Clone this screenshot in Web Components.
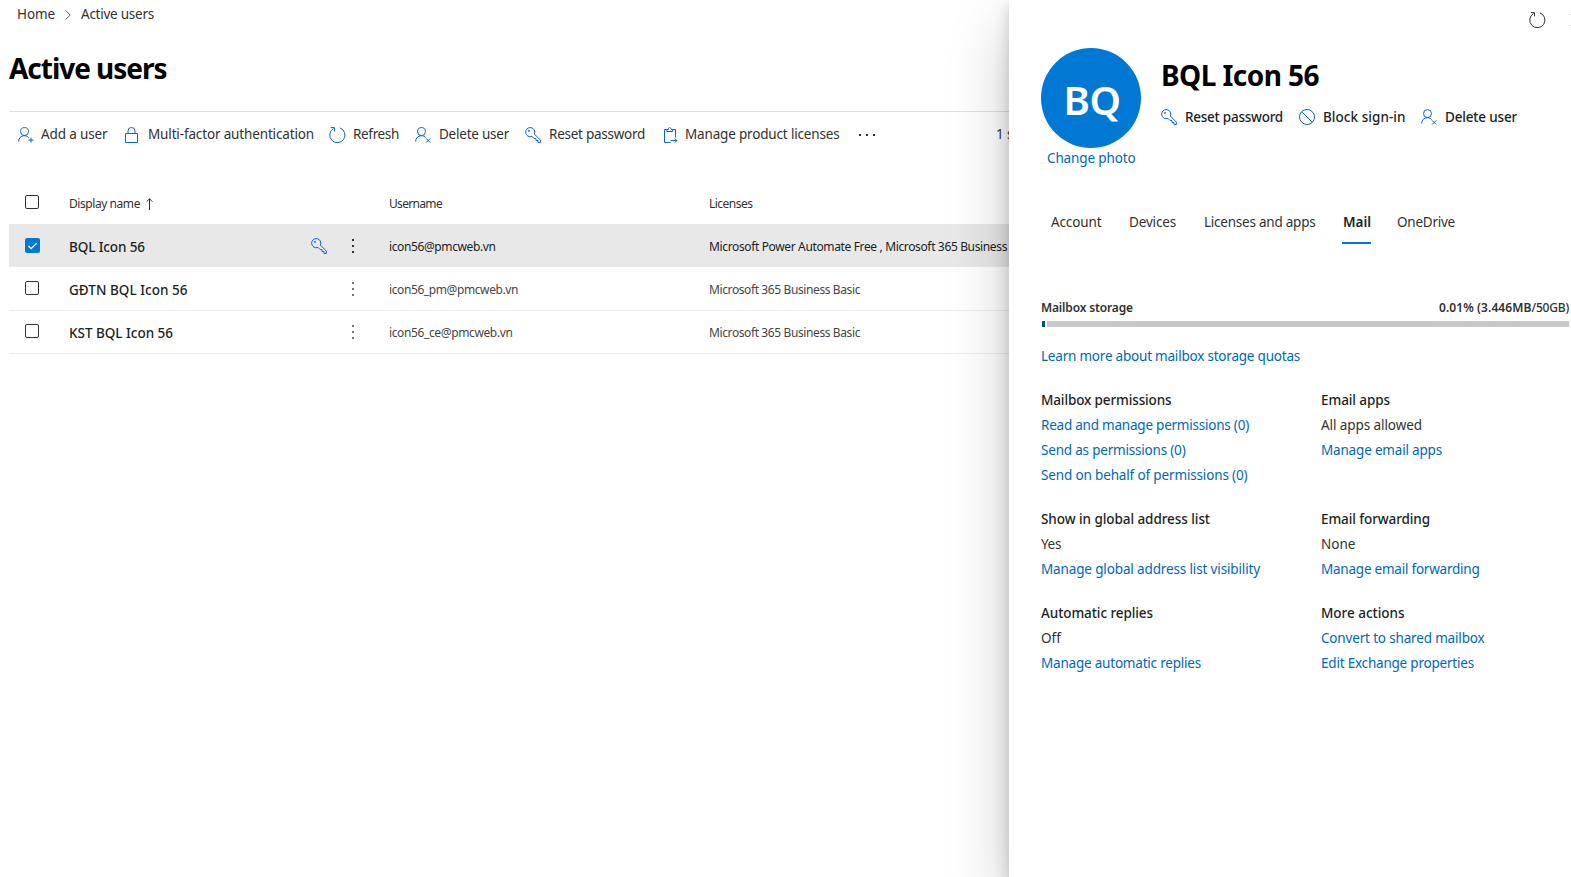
<!DOCTYPE html>
<html lang="en">
<head>
<meta charset="utf-8">
<title>Active users</title>
<style>
  html, body { margin: 0; height: 100%; overflow: hidden; background: #fff; }
  body { font-family: "Noto Sans", "Open Sans", sans-serif; font-size: 13.5px; color: #323130; }
</style>
</head>
<body>
<admin-app></admin-app>
<script>
const ICONS = {
  add: '<circle cx="6.5" cy="4.6" r="4"/><path d="M.6 14.6C.7 11 3 8.7 6.3 8.7c1.9 0 3.4.7 4.4 1.9M13 10.6v5M10.5 13.1h5"/>',
  del: '<circle cx="6.5" cy="4.6" r="4"/><path d="M.6 14.6C.7 11 3 8.7 6.3 8.7c1.9 0 3.4.7 4.4 1.9M11 11.3l4.3 4.3M15.3 11.3L11 15.6"/>',
  lock: '<path d="M1.5 6.5h12v9h-12zM4 6.500V4a3.500 3.500 0 0 1 7 0v2.500"/>',
  refresh: '<path d="M10.900.9A7.600 7.600 0 1 1 4.500 1.500"/><path d="M1.800.6h3.700v3.700"/>',
  key: '<path d="M7 9.400a4.600 4.600 0 1 1 2.400-2.300l6 6v2.300h-2.500v-1.900h-1.900v-1.900H9.200z"/><circle cx="3.900" cy="3.900" r=".6"/>',
  clip: '<path d="M8.500 15.500H2.500v-13h2.300M10.700 2.500h2.800v8M4.800 4.500V2.500h1.500C6.400 1.200 6.900.6 7.700.6s1.400.6 1.500 1.900h1.500v2zM8.500 13.500h6.500M12.700 11.300l2.200 2.200-2.200 2.200"/>',
  block: '<circle cx="8" cy="8" r="7.500"/><path d="M2.700 2.700l10.600 10.600"/>',
  close: '<path d="M.5 2.500l11 11M11.500 2.500l-11 11" stroke-width=".5"/>'
};

const define = (name, html, setup) => customElements.define(name, class extends HTMLElement {
  constructor() {
    super();
    this.attachShadow({ mode: 'open' }).innerHTML = html;
  }
  connectedCallback() { if (setup) setup(this, this.shadowRoot); }
});

/* Line icon, 16 by 16 */
define('line-icon',
  `<style>:host{display:block;width:16px;height:16px;color:#0f62cf}
  svg{display:block;overflow:visible;fill:none;stroke:currentColor;stroke-width:1}</style><svg width="16" height="16" viewBox="0 0 16 16"></svg>`,
  (el, root) => { root.querySelector('svg').innerHTML = ICONS[el.getAttribute('name')]; });

/* Single line of text, tracked so that it fills the width given in "w" */
define('fit-text',
  `<style>:host{display:block;white-space:nowrap}span{display:inline-block}</style><span><slot></slot></span>`,
  (el, root) => {
    const span = root.querySelector('span');
    const n = el.textContent.length;
    const w = parseFloat(el.getAttribute('w'));
    span.style.letterSpacing = '0px';
    const natural = span.getBoundingClientRect().width;
    span.style.letterSpacing = ((w - natural) / n).toFixed(3) + 'px';
  });

define('tool-button',
  `<style>:host{display:flex;align-items:center;line-height:20px}
  line-icon{margin-right:var(--gap,7px)}
  ::slotted(fit-text){position:relative;top:var(--rise,0)}</style><line-icon></line-icon><slot></slot>`,
  (el, root) => {
    const icon = document.createElement('line-icon');
    icon.setAttribute('name', el.getAttribute('icon'));
    root.querySelector('line-icon').replaceWith(icon);
  });

define('check-box',
  `<style>:host{display:block;box-sizing:border-box;width:14px;height:14px;border:1px solid #323130;border-radius:2px;background:#fff}
  svg{display:none}
  :host([checked]){width:15px;height:15px;border:0;background:#0078d4}
  :host([checked]) svg{display:block}</style>
  <svg width="15" height="15" viewBox="0 0 15 15" fill="none" stroke="#fff" stroke-width="1.300"><path d="M3.500 8l2.600 2.600 5.600-5.400"/></svg>`);

define('more-dots',
  `<style>:host{display:flex;flex-direction:column;gap:4px;color:#797775}
  :host([across]){flex-direction:row;gap:5px;color:#323130}
  i{width:2px;height:2px;background:currentColor}</style><i></i><i></i><i></i>`);

define('user-row',
  `<style>:host{display:grid;grid-template-columns:60px 241px 79px 320px auto;box-sizing:border-box;height:43px;padding-top:13px;border-bottom:1px solid #edebe9;
    align-items:start;font-size:12px;line-height:20px;white-space:nowrap;color:#484644}
  :host([selected]){background:#e8e8e8;border-color:#e8e8e8;color:#201f1e}
  ::slotted([slot=check]){margin:1px 0 0 16px}
  ::slotted([slot=name]){font-size:13.5px;font-weight:500;color:#201f1e}
  .acts{display:flex;padding-top:1px}
  .key{width:41px;padding-left:1px}
  more-dots{margin-top:1px}
  :host([selected]) more-dots{color:#323130}
  :host(:not([selected])) line-icon{display:none}</style>
  <slot name="check"></slot><slot name="name"></slot>
  <div class="acts"><div class="key"><line-icon name="key"></line-icon></div><more-dots></more-dots></div>
  <slot name="user"></slot><slot name="lic"></slot>`);

define('users-page',
  `<style>:host{display:block;overflow:hidden;padding-left:9px}
  nav{display:flex;align-items:center;height:20px;padding:4px 0 0 8px;color:#323130}
  nav svg{margin:1px 10px 0 10px}
  h1{margin:25px 0 0;font-size:28px;line-height:38px;font-weight:700;color:#000;height:62px}
  .bar{display:grid;grid-template-columns:106px 205px 86px 110px 137px 197px 137px auto;width:1200px;height:43px;border-top:1px solid #e1dfdd;padding:1px 0 0 9px;align-items:center;color:#323130;white-space:nowrap;line-height:20px;--rise:-1px;--gap:8px}
  .bar > :first-child{--gap:7px}
  .bar > fit-text{margin-top:-2px}
  .head{display:grid;grid-template-columns:60px 320px 320px auto;height:37px;margin-top:31px;font-size:12px;line-height:20px}
  .head check-box{margin:8px 0 0 16px}
  .head fit-text{padding-top:7px}
  .name{display:flex;gap:6px}
  .name svg{margin-top:11px}
  .table{width:1200px}
  .first{height:43px}
  .mid{height:44px;padding-top:13px}
  .last{height:43px;padding-top:12px}</style>
  <nav><fit-text w="38">Home</fit-text><svg width="6" height="10" viewBox="0 0 6 10" fill="none" stroke="#605e5c"><path d="M.7.500L5.200 5 .7 9.500"/></svg><fit-text w="73">Active users</fit-text></nav>
  <h1><fit-text w="157.500">Active users</fit-text></h1>
  <div class="bar">
    <tool-button icon="add"><fit-text w="66.500">Add a user</fit-text></tool-button>
    <tool-button icon="lock"><fit-text w="166">Multi-factor authentication</fit-text></tool-button>
    <tool-button icon="refresh"><fit-text w="46">Refresh</fit-text></tool-button>
    <tool-button icon="del"><fit-text w="70">Delete user</fit-text></tool-button>
    <tool-button icon="key"><fit-text w="96">Reset password</fit-text></tool-button>
    <tool-button icon="clip" style="--gap:7px"><fit-text w="154.500">Manage product licenses</fit-text></tool-button>
    <more-dots across></more-dots>
    <fit-text w="62">1 selected</fit-text>
  </div>
  <div class="table">
    <div class="head"><check-box></check-box>
      <div class="name"><fit-text w="71">Display name</fit-text><svg width="7" height="12" viewBox="0 0 7 12" fill="none" stroke="#323130"><path d="M3.500 12V.8M.6 3.700L3.500.8l2.900 2.900"/></svg></div>
      <fit-text w="53">Username</fit-text><fit-text w="43.500">Licenses</fit-text></div>
    <user-row class="first" selected><check-box slot="check" checked></check-box><fit-text slot="name" w="76">BQL Icon 56</fit-text><fit-text slot="user" w="106.500">icon56@pmcweb.vn</fit-text><fit-text slot="lic" w="298">Microsoft Power Automate Free , Microsoft 365 Business</fit-text></user-row>
    <user-row class="mid"><check-box slot="check"></check-box><fit-text slot="name" w="118.500">GĐTN BQL Icon 56</fit-text><fit-text slot="user" w="129">icon56_pm@pmcweb.vn</fit-text><fit-text slot="lic" w="151">Microsoft 365 Business Basic</fit-text></user-row>
    <user-row class="last"><check-box slot="check"></check-box><fit-text slot="name" w="104">KST BQL Icon 56</fit-text><fit-text slot="user" w="123.500">icon56_ce@pmcweb.vn</fit-text><fit-text slot="lic" w="151">Microsoft 365 Business Basic</fit-text></user-row>
  </div>`);

define('info-block',
  `<style>:host{display:block;line-height:25px}
  ::slotted(h3){margin:0;font-size:13.5px;font-weight:500;color:#201f1e}
  ::slotted(a){display:block;color:#0067b8}</style><slot></slot>`);

define('user-panel',
  `<style>:host{display:block;position:relative;z-index:1;background:#fff;overflow:visible;box-shadow:0 25.600px 57.600px rgba(0,0,0,.22),0 4.800px 14.400px rgba(0,0,0,.18)}
  .top{display:flex;justify-content:flex-end;gap:25px;height:36px;padding-top:12px;overflow:hidden}
  .top line-icon{flex:none;color:#323130}
  .top line-icon:last-child{width:1px}
  .who{display:grid;grid-template-columns:100px auto;gap:20px;margin-left:32px;height:130px}
  .avatar{display:flex;align-items:center;justify-content:center;box-sizing:border-box;width:100px;height:100px;padding:3px 0 0 2px;border-radius:50%;background:#0078d4;color:#fff;font-size:40px;font-weight:600;line-height:54px}
  .photo{color:#0067b8;line-height:20px;padding:0 0 0 6px}
  h2{margin:8px 0 0;font-size:28px;line-height:38px;font-weight:700;color:#000}
  .acts{display:grid;grid-template-columns:138px 122px auto;padding-top:13px;font-weight:500;color:#201f1e;--gap:8px}
  .tabs{display:grid;grid-template-columns:78px 75px 138px 55px auto;margin:34px 0 0 42px;height:32px;line-height:20px}
  .tabs .on{box-sizing:border-box;width:29px;height:32px;padding-left:1px;border-bottom:2px solid #0078d4;font-weight:600;color:#201f1e}
  .store{display:flex;justify-content:space-between;margin:54px 2px 0 32px;font-size:12px;line-height:20px;font-weight:600;color:#323130}
  .quota{display:flex;white-space:nowrap}
  .quota .cap{font-weight:500;color:#323130}
  .meter{display:grid;grid-template-columns:3px auto;gap:2px;height:6px;margin:3px 2px 0 33px}
  .meter i:first-child{background:#004e8c}.meter i{background:#c8c8c8}
  .learn{display:block;margin:19px 0 0 32px;line-height:20px;color:#0067b8}
  .grid{display:grid;grid-template-columns:280px auto;row-gap:19px;margin:22px 0 0 32px}</style>
  <div class="top"><line-icon name="refresh"></line-icon><line-icon name="close"></line-icon></div>
  <div class="who">
    <div><div class="avatar"><fit-text w="57">BQ</fit-text></div><div class="photo"><fit-text w="88.500">Change photo</fit-text></div></div>
    <div><h2><fit-text w="158">BQL Icon 56</fit-text></h2>
      <div class="acts"><tool-button icon="key"><fit-text w="98">Reset password</fit-text></tool-button><tool-button icon="block"><fit-text w="82.500">Block sign-in</fit-text></tool-button><tool-button icon="del"><fit-text w="72">Delete user</fit-text></tool-button></div></div>
  </div>
  <div class="tabs"><fit-text w="50.500">Account</fit-text><fit-text w="47">Devices</fit-text><fit-text w="111.500">Licenses and apps</fit-text><div class="on"><fit-text w="28">Mail</fit-text></div><fit-text w="58">OneDrive</fit-text></div>
  <div class="store"><fit-text w="92">Mailbox storage</fit-text><div class="quota"><fit-text w="92.500">0.01% (3.446MB</fit-text><fit-text class="cap" w="37.500">/50GB)</fit-text></div></div>
  <div class="meter"><i></i><i></i></div>
  <a class="learn"><fit-text w="259">Learn more about mailbox storage quotas</fit-text></a>
  <div class="grid">
    <info-block><h3><fit-text w="130.500">Mailbox permissions</fit-text></h3><a><fit-text w="208">Read and manage permissions (0)</fit-text></a><a><fit-text w="144.500">Send as permissions (0)</fit-text></a><a><fit-text w="206.500">Send on behalf of permissions (0)</fit-text></a></info-block>
    <info-block><h3><fit-text w="69">Email apps</fit-text></h3><fit-text w="101">All apps allowed</fit-text><a><fit-text w="121">Manage email apps</fit-text></a></info-block>
    <info-block><h3><fit-text w="169">Show in global address list</fit-text></h3><fit-text w="20">Yes</fit-text><a><fit-text w="219">Manage global address list visibility</fit-text></a></info-block>
    <info-block><h3><fit-text w="109">Email forwarding</fit-text></h3><fit-text w="34.500">None</fit-text><a><fit-text w="158.500">Manage email forwarding</fit-text></a></info-block>
    <info-block><h3><fit-text w="112">Automatic replies</fit-text></h3><fit-text w="20">Off</fit-text><a><fit-text w="160">Manage automatic replies</fit-text></a></info-block>
    <info-block><h3><fit-text w="83.500">More actions</fit-text></h3><a><fit-text w="163.500">Convert to shared mailbox</fit-text></a><a><fit-text w="153">Edit Exchange properties</fit-text></a></info-block>
  </div>`);

define('admin-app',
  `<style>:host{display:grid;grid-template-columns:1009px 562px;height:877px;overflow:hidden}users-page{min-width:0}</style>
  <users-page></users-page><user-panel></user-panel>`);
</script>
</body>
</html>
